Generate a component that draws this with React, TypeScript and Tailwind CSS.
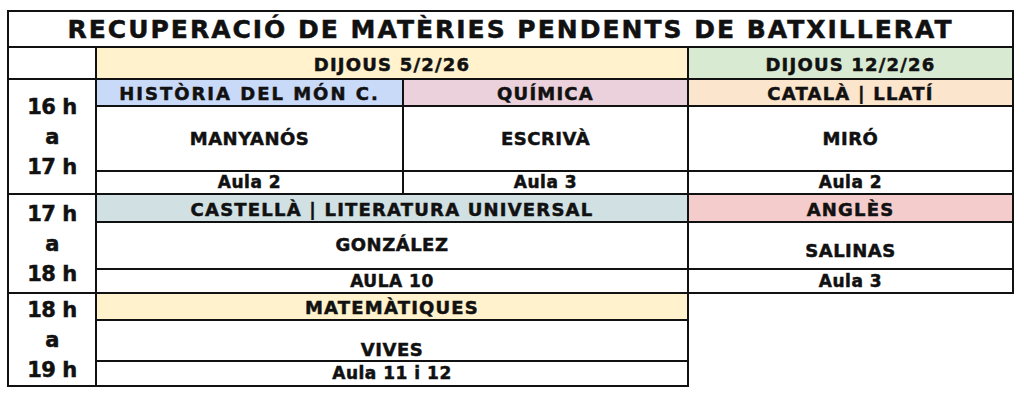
export default function App() {
  const cell = "flex items-center justify-center border-r-2 border-b-2 border-[#111] text-center whitespace-nowrap";
  const head = "pt-[2px] text-[18px] tracking-[1.2px]";
  const name = "text-[18px] tracking-[0.5px]";
  const aula = "pt-[1px] text-[17px] tracking-[0.5px]";
  const time = "row-span-3 flex-col text-[21px] leading-[30px] tracking-[-0.5px]";
  const font = { fontFamily: '"DejaVu Sans", "Open Sans", sans-serif' };

  return (
    <div className="h-[401px] w-[1024px] bg-white text-[#111]" style={font}>
      <div className="pl-[7px] pt-[10px]">
        <div className="grid w-[1007px] grid-cols-[88px_307px_285px_325px] grid-rows-[36px_32px_27px_65px_23px_28px_47px_24px_27px_41px_25px] border-l-2 border-t-2 border-[#111] font-bold [-webkit-text-stroke:0.5px_#111]">
          <div className={`${cell} col-span-4 pt-[2px] text-[25px] tracking-[2px]`}>
            RECUPERACIÓ DE MATÈRIES PENDENTS DE BATXILLERAT
          </div>

          <div className={cell}></div>
          <div className={`${cell} col-span-2 bg-[#fff2cc] ${head}`}>DIJOUS 5/2/26</div>
          <div className={`${cell} bg-[#d9ead3] ${head}`}>DIJOUS 12/2/26</div>

          <div className={`${cell} ${time}`}>
            <span>16 h</span>
            <span>a</span>
            <span>17 h</span>
          </div>
          <div className={`${cell} bg-[#c9daf8] ${head} tracking-[2px]`}>HISTÒRIA DEL MÓN C.</div>
          <div className={`${cell} bg-[#ead1dc] ${head}`}>QUÍMICA</div>
          <div className={`${cell} bg-[#fce5cd] ${head}`}>CATALÀ | LLATÍ</div>

          <div className={`${cell} ${name}`}>MANYANÓS</div>
          <div className={`${cell} ${name}`}>ESCRIVÀ</div>
          <div className={`${cell} ${name}`}>MIRÓ</div>

          <div className={`${cell} ${aula}`}>Aula 2</div>
          <div className={`${cell} ${aula}`}>Aula 3</div>
          <div className={`${cell} ${aula}`}>Aula 2</div>

          <div className={`${cell} ${time}`}>
            <span>17 h</span>
            <span>a</span>
            <span>18 h</span>
          </div>
          <div className={`${cell} col-span-2 bg-[#d0e0e3] ${head}`}>CASTELLÀ | LITERATURA UNIVERSAL</div>
          <div className={`${cell} bg-[#f4cccc] ${head}`}>ANGLÈS</div>

          <div className={`${cell} col-span-2 pb-[2px] ${name}`}>GONZÁLEZ</div>
          <div className={`${cell} pt-[9px] ${name}`}>SALINAS</div>

          <div className={`${cell} col-span-2 ${aula}`}>AULA 10</div>
          <div className={`${cell} ${aula}`}>Aula 3</div>

          <div className={`${cell} ${time}`}>
            <span>18 h</span>
            <span>a</span>
            <span>19 h</span>
          </div>
          <div className={`${cell} col-span-2 bg-[#fff2cc] ${head}`}>MATEMÀTIQUES</div>
          <div className="row-span-3"></div>

          <div className={`${cell} col-span-2 pt-[17px] ${name}`}>VIVES</div>

          <div className={`${cell} col-span-2 ${aula}`}>Aula 11 i 12</div>
        </div>
      </div>
    </div>
  );
}
